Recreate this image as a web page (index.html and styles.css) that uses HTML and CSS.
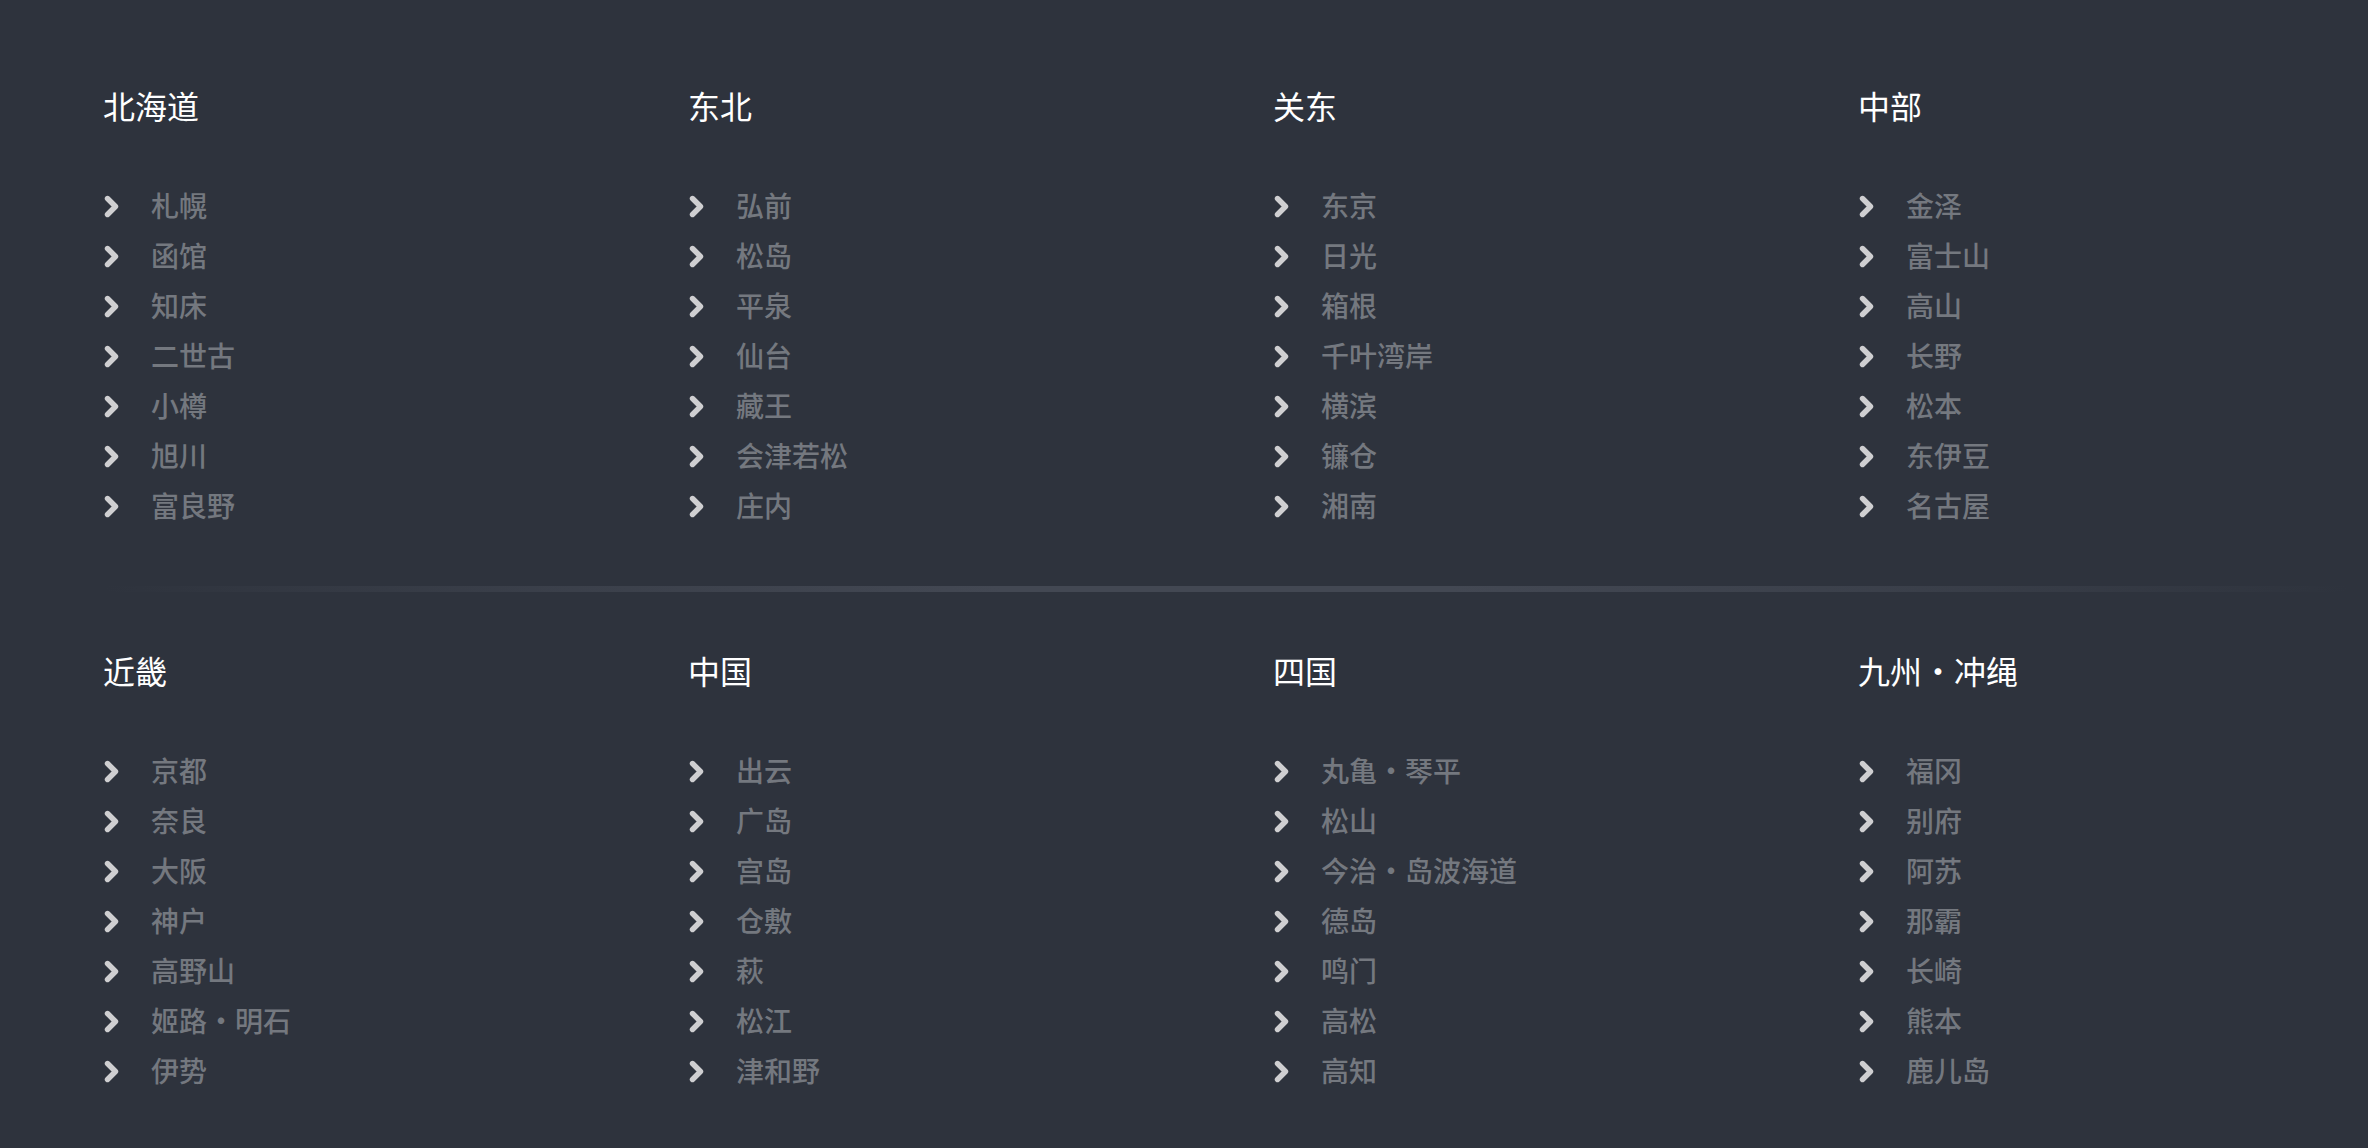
FILE: index.html
```html
<!DOCTYPE html>
<html lang="zh-CN">
<head>
<meta charset="utf-8">
<title>地区</title>
<link rel="stylesheet" href="styles.css">
</head>
<body>
<svg width="0" height="0" class="defs">
  <defs>
    <symbol id="chev" viewBox="0 0 15 23">
      <polyline points="3.5,3.5 11.5,11.5 3.5,19.5" fill="none" stroke="currentColor" stroke-width="5.4" stroke-linecap="round" stroke-linejoin="round"/>
    </symbol>
  </defs>
</svg>
<main class="page">
  <section class="region-row first">
    <div class="region">
      <h2 class="region-title">北海道</h2>
      <ul class="place-list">
        <li class="place"><svg class="chev"><use href="#chev"/></svg><span>札幌</span></li>
        <li class="place"><svg class="chev"><use href="#chev"/></svg><span>函馆</span></li>
        <li class="place"><svg class="chev"><use href="#chev"/></svg><span>知床</span></li>
        <li class="place"><svg class="chev"><use href="#chev"/></svg><span>二世古</span></li>
        <li class="place"><svg class="chev"><use href="#chev"/></svg><span>小樽</span></li>
        <li class="place"><svg class="chev"><use href="#chev"/></svg><span>旭川</span></li>
        <li class="place"><svg class="chev"><use href="#chev"/></svg><span>富良野</span></li>
      </ul>
    </div>
    <div class="region">
      <h2 class="region-title">东北</h2>
      <ul class="place-list">
        <li class="place"><svg class="chev"><use href="#chev"/></svg><span>弘前</span></li>
        <li class="place"><svg class="chev"><use href="#chev"/></svg><span>松岛</span></li>
        <li class="place"><svg class="chev"><use href="#chev"/></svg><span>平泉</span></li>
        <li class="place"><svg class="chev"><use href="#chev"/></svg><span>仙台</span></li>
        <li class="place"><svg class="chev"><use href="#chev"/></svg><span>藏王</span></li>
        <li class="place"><svg class="chev"><use href="#chev"/></svg><span>会津若松</span></li>
        <li class="place"><svg class="chev"><use href="#chev"/></svg><span>庄内</span></li>
      </ul>
    </div>
    <div class="region">
      <h2 class="region-title">关东</h2>
      <ul class="place-list">
        <li class="place"><svg class="chev"><use href="#chev"/></svg><span>东京</span></li>
        <li class="place"><svg class="chev"><use href="#chev"/></svg><span>日光</span></li>
        <li class="place"><svg class="chev"><use href="#chev"/></svg><span>箱根</span></li>
        <li class="place"><svg class="chev"><use href="#chev"/></svg><span>千叶湾岸</span></li>
        <li class="place"><svg class="chev"><use href="#chev"/></svg><span>横滨</span></li>
        <li class="place"><svg class="chev"><use href="#chev"/></svg><span>镰仓</span></li>
        <li class="place"><svg class="chev"><use href="#chev"/></svg><span>湘南</span></li>
      </ul>
    </div>
    <div class="region">
      <h2 class="region-title">中部</h2>
      <ul class="place-list">
        <li class="place"><svg class="chev"><use href="#chev"/></svg><span>金泽</span></li>
        <li class="place"><svg class="chev"><use href="#chev"/></svg><span>富士山</span></li>
        <li class="place"><svg class="chev"><use href="#chev"/></svg><span>高山</span></li>
        <li class="place"><svg class="chev"><use href="#chev"/></svg><span>长野</span></li>
        <li class="place"><svg class="chev"><use href="#chev"/></svg><span>松本</span></li>
        <li class="place"><svg class="chev"><use href="#chev"/></svg><span>东伊豆</span></li>
        <li class="place"><svg class="chev"><use href="#chev"/></svg><span>名古屋</span></li>
      </ul>
    </div>
  </section>
  <div class="divider"></div>
  <section class="region-row second">
    <div class="region">
      <h2 class="region-title">近畿</h2>
      <ul class="place-list">
        <li class="place"><svg class="chev"><use href="#chev"/></svg><span>京都</span></li>
        <li class="place"><svg class="chev"><use href="#chev"/></svg><span>奈良</span></li>
        <li class="place"><svg class="chev"><use href="#chev"/></svg><span>大阪</span></li>
        <li class="place"><svg class="chev"><use href="#chev"/></svg><span>神户</span></li>
        <li class="place"><svg class="chev"><use href="#chev"/></svg><span>高野山</span></li>
        <li class="place"><svg class="chev"><use href="#chev"/></svg><span>姬路・明石</span></li>
        <li class="place"><svg class="chev"><use href="#chev"/></svg><span>伊势</span></li>
      </ul>
    </div>
    <div class="region">
      <h2 class="region-title">中国</h2>
      <ul class="place-list">
        <li class="place"><svg class="chev"><use href="#chev"/></svg><span>出云</span></li>
        <li class="place"><svg class="chev"><use href="#chev"/></svg><span>广岛</span></li>
        <li class="place"><svg class="chev"><use href="#chev"/></svg><span>宫岛</span></li>
        <li class="place"><svg class="chev"><use href="#chev"/></svg><span>仓敷</span></li>
        <li class="place"><svg class="chev"><use href="#chev"/></svg><span>萩</span></li>
        <li class="place"><svg class="chev"><use href="#chev"/></svg><span>松江</span></li>
        <li class="place"><svg class="chev"><use href="#chev"/></svg><span>津和野</span></li>
      </ul>
    </div>
    <div class="region">
      <h2 class="region-title">四国</h2>
      <ul class="place-list">
        <li class="place"><svg class="chev"><use href="#chev"/></svg><span>丸亀・琴平</span></li>
        <li class="place"><svg class="chev"><use href="#chev"/></svg><span>松山</span></li>
        <li class="place"><svg class="chev"><use href="#chev"/></svg><span>今治・岛波海道</span></li>
        <li class="place"><svg class="chev"><use href="#chev"/></svg><span>德岛</span></li>
        <li class="place"><svg class="chev"><use href="#chev"/></svg><span>鸣门</span></li>
        <li class="place"><svg class="chev"><use href="#chev"/></svg><span>高松</span></li>
        <li class="place"><svg class="chev"><use href="#chev"/></svg><span>高知</span></li>
      </ul>
    </div>
    <div class="region">
      <h2 class="region-title">九州・冲绳</h2>
      <ul class="place-list">
        <li class="place"><svg class="chev"><use href="#chev"/></svg><span>福冈</span></li>
        <li class="place"><svg class="chev"><use href="#chev"/></svg><span>别府</span></li>
        <li class="place"><svg class="chev"><use href="#chev"/></svg><span>阿苏</span></li>
        <li class="place"><svg class="chev"><use href="#chev"/></svg><span>那霸</span></li>
        <li class="place"><svg class="chev"><use href="#chev"/></svg><span>长崎</span></li>
        <li class="place"><svg class="chev"><use href="#chev"/></svg><span>熊本</span></li>
        <li class="place"><svg class="chev"><use href="#chev"/></svg><span>鹿儿岛</span></li>
      </ul>
    </div>
  </section>
</main>
</body>
</html>
```

FILE: styles.css
```css
html, body {
  margin: 0;
  padding: 0;
}

body {
  background: #2e333d;
  font-family: "Noto Sans CJK SC", "Noto Sans", sans-serif;
  height: 1148px;
  overflow: hidden;
}

.defs {
  position: absolute;
  width: 0;
  height: 0;
}

.page {
  display: flex;
  flex-direction: column;
}

.region-row {
  display: grid;
  grid-template-columns: repeat(4, 585px);
  padding-left: 103px;
}

.region-row.first {
  padding-top: 85px;
}

.region-row.second {
  padding-top: 58px;
}

.region-title {
  margin: 0;
  font-size: 32px;
  line-height: 40px;
  font-weight: 400;
  color: #ffffff;
}

.place-list {
  list-style: none;
  margin: 55px 0 0;
  padding: 0;
}

.place {
  display: flex;
  align-items: center;
  height: 50px;
  font-size: 28px;
  line-height: 50px;
  font-weight: 500;
  color: #74787f;
}

.chev {
  width: 15px;
  height: 23px;
  color: #cfcfd1;
  margin-left: 1px;
  margin-top: 2px;
  margin-right: 32px;
  flex: none;
}

.divider {
  height: 6px;
  margin: 56px 20px 0 104px;
  background: linear-gradient(90deg, rgba(67, 72, 83, 0) 0%, rgba(67, 72, 83, 0.6) 20%, #434853 40%, #434853 60%, rgba(67, 72, 83, 0.6) 80%, rgba(67, 72, 83, 0) 100%);
}
```
